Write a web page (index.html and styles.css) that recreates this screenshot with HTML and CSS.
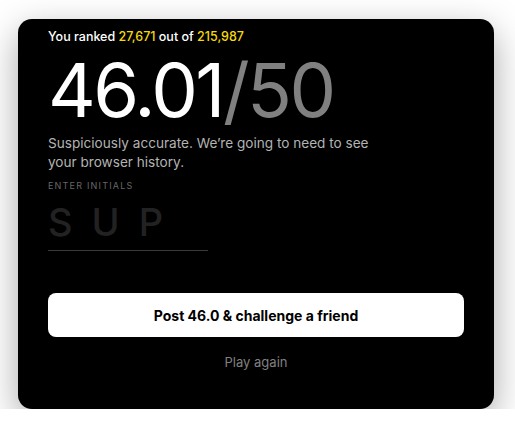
FILE: index.html
```html
<!DOCTYPE html>
<html lang="en">
<head>
    <meta charset="UTF-8">
    <meta name="viewport" content="width=device-width, initial-scale=1.0">
    <title>Your score</title>
    <link rel="stylesheet" href="styles.css">
</head>
<body>
    <div class="card">
        <p class="rank">You ranked <span class="hl">27,671</span> out of <span class="hl">215,987</span></p>
        <h1 class="score">46.01<span class="total">/50</span></h1>
        <p class="verdict">Suspiciously accurate. We’re going to need to see your browser history.</p>
        <label class="initials-label" for="initials">ENTER INITIALS</label>
        <input class="initials" id="initials" type="text" maxlength="3" placeholder="SUP">
        <button class="post">Post 46.0 &amp; challenge a friend</button>
        <button class="again">Play again</button>
    </div>
</body>
</html>
```

FILE: styles.css
```css
body {
    margin: 0;
    font-family: Inter, "Noto Sans", sans-serif;
    background-color: #fff;
}
.card {
    width: 476px;
    height: 390px;
    box-sizing: border-box;
    margin: 19px 0 0 18px;
    padding: 9px 30px 0;
    background-color: #000;
    border-radius: 14px;
    box-shadow: 0 12px 36px rgba(0, 0, 0, 0.35);
    display: flex;
    flex-direction: column;
    align-items: flex-start;
}
.rank {
    margin: 0;
    font-size: 12.5px;
    font-weight: 500;
    line-height: 18px;
    color: #fff;
}
.hl {
    color: #f5d90a;
}
.score {
    margin: 2px 0 0;
    font-size: 74px;
    font-weight: 400;
    line-height: 84px;
    letter-spacing: -2.5px;
    color: #fff;
}
.total {
    color: #808080;
}
.verdict {
    margin: 2px 0 0;
    max-width: 340px;
    font-size: 13.6px;
    line-height: 19px;
    color: #b3b3b3;
}
.initials-label {
    margin-top: 8px;
    font-size: 9px;
    letter-spacing: 1.2px;
    color: #666;
}
.initials {
    margin-top: 8px;
    width: 160px;
    padding: 0 0 5px;
    background: none;
    border: none;
    border-bottom: 1px solid #3a3a3a;
    font-family: inherit;
    font-size: 38px;
    font-weight: 500;
    letter-spacing: 19px;
    color: #fff;
    outline: none;
}
.initials::placeholder {
    color: #222;
}
.post {
    margin-top: 42px;
    width: 100%;
    height: 44px;
    border: none;
    border-radius: 8px;
    background-color: #fff;
    font-family: inherit;
    font-size: 14px;
    font-weight: 700;
    color: #000;
}
.again {
    align-self: center;
    margin-top: 16px;
    background: none;
    border: none;
    font-family: inherit;
    font-size: 13px;
    color: #808080;
}
```
